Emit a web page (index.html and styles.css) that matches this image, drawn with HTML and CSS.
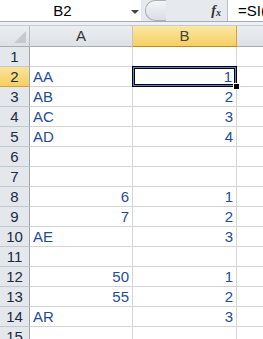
FILE: index.html
```html
<!DOCTYPE html>
<html lang="en">
<head>
  <meta charset="UTF-8">
  <title>Sheet</title>
  <link rel="stylesheet" href="styles.css">
</head>
<body>
  <div class="formula-bar">
    <div class="name-box">
      <span class="name">B2</span>
      <span class="arrow"></span>
    </div>
    <div class="bar-middle">
      <span class="pill"></span>
      <span class="fx">f<sub>x</sub></span>
    </div>
    <div class="formula">=SI(ESTNUM(A2)</div>
  </div>
  <div class="band"></div>

  <div class="sheet">
    <div class="corner"><span class="tri"></span></div>
    <div class="col-head">A</div>
    <div class="col-head sel">B</div>
    <div class="col-head last"></div>

    <div class="row-head">1</div><div class="cell"></div><div class="cell"></div><div class="cell last"></div>
    <div class="row-head sel">2</div><div class="cell">AA</div><div class="cell num active">1<span class="handle"></span></div><div class="cell last"></div>
    <div class="row-head">3</div><div class="cell">AB</div><div class="cell num">2</div><div class="cell last"></div>
    <div class="row-head">4</div><div class="cell">AC</div><div class="cell num">3</div><div class="cell last"></div>
    <div class="row-head">5</div><div class="cell">AD</div><div class="cell num">4</div><div class="cell last"></div>
    <div class="row-head">6</div><div class="cell"></div><div class="cell"></div><div class="cell last"></div>
    <div class="row-head">7</div><div class="cell"></div><div class="cell"></div><div class="cell last"></div>
    <div class="row-head">8</div><div class="cell num">6</div><div class="cell num">1</div><div class="cell last"></div>
    <div class="row-head">9</div><div class="cell num">7</div><div class="cell num">2</div><div class="cell last"></div>
    <div class="row-head">10</div><div class="cell">AE</div><div class="cell num">3</div><div class="cell last"></div>
    <div class="row-head">11</div><div class="cell"></div><div class="cell"></div><div class="cell last"></div>
    <div class="row-head">12</div><div class="cell num">50</div><div class="cell num">1</div><div class="cell last"></div>
    <div class="row-head">13</div><div class="cell num">55</div><div class="cell num">2</div><div class="cell last"></div>
    <div class="row-head">14</div><div class="cell">AR</div><div class="cell num">3</div><div class="cell last"></div>
    <div class="row-head">15</div><div class="cell"></div><div class="cell"></div><div class="cell last"></div>
  </div>
</body>
</html>
```

FILE: styles.css
```css
body {
  margin: 0;
  width: 263px;
  height: 339px;
  overflow: hidden;
  background: #fff;
  font-family: "Liberation Sans", Arial, sans-serif;
}

/* formula bar */
.formula-bar {
  display: flex;
  height: 21px;
  border-bottom: 1px solid #a5acb5;
  white-space: nowrap;
}

.name-box {
  width: 141px;
  display: flex;
  align-items: center;
  background: #fff;
  position: relative;
}

.name {
  flex: 1;
  text-align: center;
  font-size: 15px;
  color: #000;
  padding-right: 16px;
}

.arrow {
  position: absolute;
  left: 131px;
  top: 10px;
  border-left: 4px solid transparent;
  border-right: 4px solid transparent;
  border-top: 4px solid #444;
}

.bar-middle {
  width: 86px;
  display: flex;
  align-items: center;
  background: #e6e9ee;
  border-right: 1px solid #b9c0c9;
}

.pill {
  width: 20px;
  height: 19px;
  margin-left: 4px;
  border: 1px solid #a9b0b8;
  border-right: none;
  border-radius: 10px 0 0 10px;
  background: linear-gradient(#f4f5f7, #dadee4);
}

.fx {
  margin-left: auto;
  margin-right: 6px;
  font-family: "Liberation Serif", serif;
  font-style: italic;
  font-weight: bold;
  font-size: 14px;
  color: #333;
}

.fx sub {
  font-size: 10px;
  vertical-align: -1px;
}

.formula {
  flex: 1;
  overflow: hidden;
  background: #fff;
  font-size: 15px;
  color: #000;
  padding: 2px 0 0 10px;
}

.band {
  height: 3px;
  background: #edf0f4;
  border-bottom: 1px solid #c5cad2;
}

/* grid */
.sheet {
  display: grid;
  grid-template-columns: 30px 103px 104px 1fr;
  grid-template-rows: 21px;
  grid-auto-rows: 20px;
  font-size: 15px;
}

.corner,
.col-head,
.row-head {
  background: linear-gradient(#eceef1, #dde1e6);
  color: #333;
  box-sizing: border-box;
}

.corner {
  position: relative;
  border-right: 1px solid #b7bcc4;
  border-bottom: 1px solid #a9aeb6;
}

.tri {
  position: absolute;
  right: 3px;
  bottom: 3px;
  border-left: 12px solid transparent;
  border-bottom: 12px solid #c6cacf;
}

.col-head {
  text-align: center;
  line-height: 20px;
  border-right: 1px solid #c0c5cc;
  border-bottom: 1px solid #a9aeb6;
}

.col-head.last {
  border-right: none;
}

.col-head.sel {
  background: linear-gradient(#fbe8a3, #f6cf62);
  border-right: 1px solid #d5a23d;
  border-bottom: 1px solid #c28b26;
  color: #444;
}

.row-head {
  background: #e4e7eb;
  text-align: center;
  line-height: 20px;
  color: #1b2a45;
  border-right: 1px solid #9ea4ad;
  border-bottom: 1px solid #c3c8cf;
}

.row-head.sel {
  background: linear-gradient(#fbe39a, #f6cf62);
  border-bottom: 1px solid #d5a23d;
}

.cell {
  box-sizing: border-box;
  border-right: 1px solid #d4d4d4;
  border-bottom: 1px solid #d4d4d4;
  padding: 0 3px;
  line-height: 20px;
  color: #1f4c9c;
  overflow: hidden;
}

.cell.last {
  border-right: none;
}

.num {
  text-align: right;
}

.active {
  position: relative;
  overflow: visible;
  margin: -1px 0 0 -1px;
  border: 1px solid #000;
  box-shadow: inset 0 0 0 1px #4a8ad8, inset 0 0 0 2px #000;
  line-height: 19px;
  padding-right: 4px;
}

.handle {
  position: absolute;
  right: -4px;
  bottom: -4px;
  width: 5px;
  height: 5px;
  background: #000;
  border: 1px solid #fff;
}
```
